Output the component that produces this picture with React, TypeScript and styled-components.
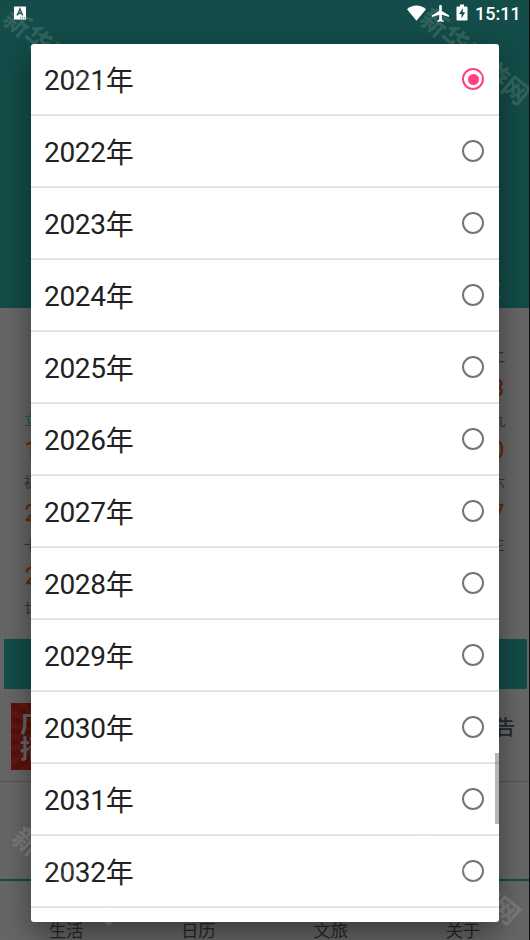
import React from "react";
import styled, { createGlobalStyle } from "styled-components";

const Global = createGlobalStyle`
  * { box-sizing: border-box; }
  body { margin: 0; background: #000; overflow: hidden; font-family: Roboto, "Noto Sans CJK SC", sans-serif; }
`;

const Screen = styled.div`
  position: relative;
  width: 530px;
  height: 940px;
  overflow: hidden;
  border-right: 1px solid #0c0d10;
`;

const Page = styled.div`
  display: flex;
  flex-direction: column;
  height: 940px;
  background: #fff;
`;

const Header = styled.header`
  display: flex;
  height: 308px;
  background: #30beb4;
  justify-content: flex-end;
  align-items: flex-end;
  padding: 0 28px 8px 0;
  color: #d8f2f0;
  font-size: 17px;
  line-height: 20px;
`;

const Calendar = styled.section`
  display: grid;
  grid-template-columns: repeat(7, 1fr);
  grid-auto-rows: 62.7px;
  height: 331px;
  padding-top: 2px;
`;

const Day = styled.div`
  display: flex;
  flex-direction: column;
  align-items: center;
`;

const DayNumber = styled.span<{ $weekend: boolean }>`
  font-size: 23px;
  line-height: 31px;
  color: ${(p) => (p.$weekend ? "#ff6a10" : "#333")};
  -webkit-text-stroke: 0.3px currentColor;
`;

const Lunar = styled.span<{ $term: boolean }>`
  font-size: 14px;
  line-height: 32px;
  color: ${(p) => (p.$term ? "#30dcd0" : "#888")};
`;

const TealBar = styled.div`
  height: 50px;
  margin: 0 2.5px 0 3.5px;
  background: #30beb4;
`;

const AdBanner = styled.section`
  display: flex;
  justify-content: space-between;
  height: 93px;
  padding: 14px 14px 0 11px;
  border-bottom: 1px solid #d2d2d2;
`;

const AdPicture = styled.div`
  width: 100px;
  height: 67px;
  padding: 8px 0 0 9px;
  background: repeating-conic-gradient(from 10deg at 48% 45%, #f03a2a 0 7deg, #dc2c1e 7deg 14deg);
  color: #fff;
  font-size: 25px;
  font-weight: 700;
  line-height: 26px;
`;

const AdTitle = styled.div`
  font-size: 20px;
  font-weight: 500;
  line-height: 50px;
  color: #5c666c;
`;

const Spacer = styled.div`
  flex: 1;
`;

const TabBar = styled.nav`
  display: grid;
  grid-template-columns: repeat(4, 1fr);
  height: 61px;
  border-top: 2px solid #30beb4;
  align-items: end;
  text-align: center;
  font-size: 17.5px;
  line-height: 18px;
  color: #666;
`;

const Scrim = styled.div`
  position: absolute;
  inset: 0;
  display: flex;
  flex-direction: column;
  background: rgba(0, 0, 0, 0.6);
`;

const StatusBar = styled.div`
  display: flex;
  align-items: center;
  height: 44px;
  flex: none;
  padding: 0 8px 18px 13px;
  color: #fff;
`;

const StatusIcons = styled.div`
  display: flex;
  align-items: center;
  gap: 6px;
`;

const Clock = styled.span`
  width: 46px;
  margin-left: 6px;
  padding-top: 1px;
  font-size: 18px;
  font-weight: 500;
  line-height: 20px;
`;

const Dialog = styled.div`
  position: relative;
  width: 468px;
  height: 878px;
  margin-left: 31px;
  flex: none;
  overflow: hidden;
  border-radius: 3px;
  background: #fff;
`;

const DialogShadow = styled.div`
  position: absolute;
  left: 31px;
  top: 44px;
  width: 468px;
  height: 878px;
  border-radius: 3px;
  box-shadow: 0 12px 30px rgba(0, 0, 0, 0.42);
`;

const Option = styled.label`
  display: flex;
  align-items: center;
  justify-content: space-between;
  height: 72px;
  padding: 0 15px 0 13px;
  border-bottom: 2px solid #e3e3e3;
  font-size: 28px;
  line-height: 40px;
  color: #212121;
`;

const OptionText = styled.span`
  display: flex;
  align-items: flex-start;
  height: 44px;
  padding-top: 4px;
  letter-spacing: -0.3px;
`;

const Suffix = styled.span`
  padding-top: 1px;
`;

const Radio = styled.span<{ $on: boolean }>`
  display: grid;
  place-items: center;
  width: 22px;
  height: 22px;
  border-radius: 50%;
  border: 2px solid ${(p) => (p.$on ? "#ff4081" : "#757575")};
  &::after {
    content: "";
    width: 11px;
    height: 11px;
    border-radius: 50%;
    background: ${(p) => (p.$on ? "#ff4081" : "transparent")};
  }
`;

const ScrollThumb = styled.div`
  position: absolute;
  right: 0;
  top: 709px;
  width: 4.5px;
  height: 71px;
  background: rgba(0, 0, 0, 0.29);
`;

const Watermark = styled.div<{ $x: number; $y: number }>`
  position: absolute;
  left: ${(p) => p.$x - 14}px;
  top: ${(p) => p.$y - 14}px;
  font-family: "Noto Sans CJK SC", sans-serif;
  font-size: 26.5px;
  font-weight: 700;
  line-height: 28px;
  white-space: nowrap;
  color: rgba(255, 255, 255, 0.15);
  transform: rotate(40deg);
  transform-origin: 14px 14px;
`;

const years = Array.from({ length: 13 }, (_, i) => 2021 + i);

const lunar = [
  "廿七", "廿八", "廿九", "三十", "初一", "初二", "立冬", "初四", "初五", "初六",
  "初七", "初八", "初九", "初十", "十一", "十二", "十三", "十四", "十五", "十六",
  "十七", "小雪", "十九", "二十", "廿一", "廿二", "廿三", "廿四", "廿五", "廿六",
];

const terms = ["立冬", "小雪"];

const cells: (number | null)[] = [null, ...lunar.map((_, i) => i + 1)];

const marks = [
  [19, 22],
  [436, 22],
  [28, 841],
  [426, 842],
];

export default function App() {
  return (
    <Screen>
      <Global />
      <Page>
        <Header>宜</Header>
        <Calendar>
          {cells.map((d, i) => (
            <Day key={i}>
              {d !== null && (
                <>
                  <DayNumber $weekend={i % 7 === 0 || i % 7 === 6}>{d}</DayNumber>
                  <Lunar $term={terms.includes(lunar[d - 1])}>{lunar[d - 1]}</Lunar>
                </>
              )}
            </Day>
          ))}
        </Calendar>
        <TealBar />
        <AdBanner>
          <AdPicture>
            广告
            <br />
            招商
          </AdPicture>
          <AdTitle>广告</AdTitle>
        </AdBanner>
        <Spacer />
        <TabBar>
          {["生活", "日历", "文旅", "关于"].map((t) => (
            <span key={t}>{t}</span>
          ))}
        </TabBar>
      </Page>
      <Scrim>
        <DialogShadow />
        <StatusBar>
          <svg width="14" height="14" viewBox="0 0 14 14">
            <rect x="1" y="0.5" width="12" height="13" rx="0.5" fill="#fff" />
            <path d="M4.200 9.500 6.900 3 9.600 9.500M5.200 7.400h3.400" fill="none" stroke="#1d4f4c" strokeWidth="1.6" />
            <path d="M7.200 11.800h1M9.100 11.800h1M11 11.800h1" stroke="#1d4f4c" strokeWidth="1" />
          </svg>
          <Spacer />
          <StatusIcons>
            <svg width="19" height="16" viewBox="0 0 20 16" preserveAspectRatio="none">
              <path d="M0 4.200C6 -0.600 14 -0.600 20 4.200L10 15.800Z" fill="#fff" />
            </svg>
            <svg width="17" height="17" viewBox="2 2 19 20" preserveAspectRatio="none">
              <path d="M21 16v-2l-8-5V3.500C13 2.670 12.330 2 11.500 2S10 2.670 10 3.500V9l-8 5v2l8-2.500V19l-2 1.500V22l3.500-1 3.500 1v-1.500L13 19v-5.500l8 2.500z" fill="#fff" />
            </svg>
            <svg width="14" height="18" viewBox="6.500 0.500 14 18">
              <path d="M11.500 1h4v2h2.500q1 0 1 1v12q0 1-1 1h-9q-1 0-1-1v-12q0-1 1-1h2.500z" fill="#fff" />
              <path d="M14.600 4.500 10.500 10.600h2.500v4.200L16.700 8.800h-2.500z" fill="#194f4b" />
            </svg>
          </StatusIcons>
          <Clock>15:11</Clock>
        </StatusBar>
        <Dialog>
          {years.map((y) => (
            <Option key={y}>
              <OptionText>
                <span>{y}</span>
                <Suffix>年</Suffix>
              </OptionText>
              <Radio $on={y === 2021} />
            </Option>
          ))}
          <ScrollThumb />
        </Dialog>
      </Scrim>
      {marks.map(([x, y]) => (
        <Watermark key={`${x}-${y}`} $x={x} $y={y}>
          新华手游网
        </Watermark>
      ))}
    </Screen>
  );
}
